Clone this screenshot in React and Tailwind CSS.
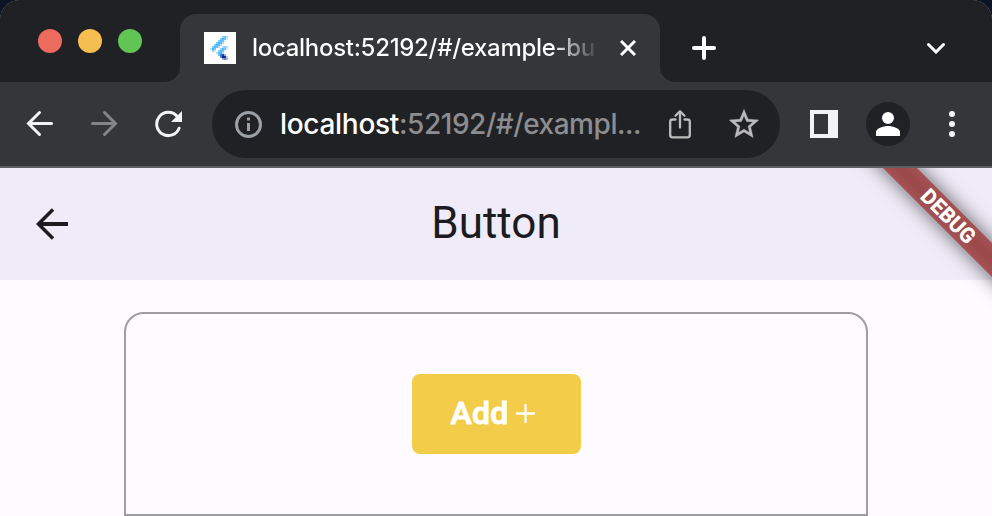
const FAVICON = [
  ["9,2", "#8fd0f8"], ["10,2", "#74c4f7"], ["11,2", "#b4defa"],
  ["8,3", "#7cc8f7"], ["9,3", "#55b9f5"], ["10,3", "#74c4f7"], ["11,3", "#d5edfc"],
  ["7,4", "#7cc8f7"], ["8,4", "#55b9f5"], ["9,4", "#74c4f7"], ["10,4", "#dff1fd"],
  ["6,5", "#7cc8f7"], ["7,5", "#55b9f5"], ["8,5", "#64bef6"], ["9,5", "#b4defa"],
  ["5,6", "#7cc8f7"], ["6,6", "#55b9f5"], ["7,6", "#64bef6"], ["8,6", "#b4defa"],
  ["4,7", "#7cc8f7"], ["5,7", "#55b9f5"], ["6,7", "#64bef6"], ["7,7", "#b4defa"], ["9,7", "#b4defa"], ["10,7", "#8fd0f8"], ["11,7", "#b4defa"],
  ["3,8", "#b4defa"], ["4,8", "#55b9f5"], ["5,8", "#74c4f7"], ["8,8", "#8fd0f8"], ["9,8", "#55b9f5"], ["10,8", "#74c4f7"], ["11,8", "#d5edfc"],
  ["4,9", "#8fd0f8"], ["5,9", "#d5edfc"], ["7,9", "#8fd0f8"], ["8,9", "#55b9f5"], ["9,9", "#74c4f7"], ["10,9", "#dff1fd"],
  ["6,10", "#b4defa"], ["7,10", "#55b9f5"], ["8,10", "#55b9f5"], ["9,10", "#b4defa"],
  ["7,11", "#74c4f7"], ["8,11", "#2f86cf"], ["9,11", "#1d4a9c"], ["10,11", "#9aa9cd"],
  ["8,12", "#5a7fc4"], ["9,12", "#02298a"], ["10,12", "#12388f"], ["11,12", "#c7cfe3"],
  ["9,13", "#93a3ca"], ["10,13", "#6f86ba"], ["11,13", "#a9b5d3"],
];

function Favicon() {
  return (
    <svg className="size-8 shrink-0 bg-white" viewBox="0 0 16 16" shapeRendering="crispEdges">
      {FAVICON.map(([pos, fill]) => {
        const [x, y] = pos.split(",");
        return <rect key={pos} x={x} y={y} width="1" height="1" fill={fill} />;
      })}
    </svg>
  );
}

function TabStrip() {
  return (
    <div className="flex h-[82px] bg-[#35363a]">
      <div className="flex w-[180px] shrink-0 gap-4 rounded-br-[15px] bg-[#202124] pl-[38px] pt-[29px]">
        <span className="size-6 rounded-full bg-[#ed6a5f]" />
        <span className="size-6 rounded-full bg-[#f6be50]" />
        <span className="size-6 rounded-full bg-[#61c555]" />
      </div>
      <div className="w-[480px] shrink-0 bg-[#202124] pt-[14px]">
        <div className="flex h-[68px] items-center rounded-t-[16px] bg-[#35363a] pl-6">
          <Favicon />
          <div className="ml-4 w-[344px] whitespace-nowrap bg-[linear-gradient(to_right,#fff_300px,#35363a_348px)] bg-clip-text text-[24px] font-medium leading-[36px] tracking-[-0.3px] text-transparent">
            localhost:52192/#/example-bu
          </div>
          <svg className="ml-6 size-4 shrink-0" viewBox="0 0 16 16" fill="none" stroke="#fff" strokeWidth="3">
            <path d="M1 1 15 15M15 1 1 15" />
          </svg>
        </div>
      </div>
      <div className="flex flex-1 items-center justify-between rounded-bl-[15px] bg-[#202124] pl-8 pr-[46px] pt-[14px]">
        <svg className="size-6" viewBox="0 0 24 24" stroke="#fff" strokeWidth="4" strokeLinecap="round">
          <path d="M12 2v20M2 12h20" />
        </svg>
        <svg className="h-3 w-5" viewBox="0 0 20 12" fill="none" stroke="#fff" strokeWidth="3" strokeLinecap="round">
          <path d="M2.5 2.500 10 10 17.5 2.500" />
        </svg>
      </div>
    </div>
  );
}

function Toolbar() {
  return (
    <div className="flex h-[86px] items-center border-b-2 border-[#5d5e62] bg-[#35363a]">
      <svg className="ml-[26px] size-7 shrink-0" viewBox="0 0 28 28" fill="none" stroke="#f1f3f4" strokeWidth="3" strokeLinecap="round">
        <path d="M25.5 13.5H3M13.5 2.5 2.5 13.5 13.5 24.5" />
      </svg>
      <svg className="ml-9 size-7 shrink-0" viewBox="0 0 28 28" fill="none" stroke="#848588" strokeWidth="3" strokeLinecap="round">
        <path d="M2.5 13.5H25M14.500 2.5 25.500 13.500 14.500 24.500" />
      </svg>
      <svg className="ml-9 size-7 shrink-0" viewBox="0 0 28 28" fill="none">
        <path d="M25.100 18.200A11.600 11.600 0 1 1 23 6.300" stroke="#f1f3f4" strokeWidth="3" strokeLinecap="round" />
        <path d="M28 1v11H17z" fill="#f1f3f4" />
      </svg>
      <div className="ml-[30px] flex h-[68px] w-[568px] shrink-0 items-center rounded-full bg-[#202124] pl-[23px]">
        <svg className="size-7 shrink-0" viewBox="0 0 28 28" fill="none" stroke="#9aa0a6" strokeWidth="3">
          <circle cx="13.5" cy="14.500" r="12" />
          <path d="M13.500 7.500v3M13.500 13v8" />
        </svg>
        <div className="ml-[17px] w-[362px] shrink-0 whitespace-nowrap text-[28px] font-medium leading-[40px] tracking-[-0.3px] text-white">
          localhost<span className="tracking-[-0.450px] text-[#8c8d90]">:52192/#/exampl...</span>
        </div>
        <svg className="ml-[26px] h-[30px] w-6 shrink-0" viewBox="0 0 24 30" fill="none" stroke="#bcbcbd" strokeWidth="2.300" strokeLinecap="round" strokeLinejoin="round">
          <path d="M7.500 10.500H4.500Q2.200 10.500 2.200 12.800V26Q2.200 28.300 4.500 28.300H19.500Q21.800 28.300 21.800 26V12.800Q21.800 10.500 19.500 10.500H16.500M12 18.500V2.500M7.500 6.800 12 2.300 16.500 6.800" />
        </svg>
        <svg className="ml-[37px] size-[30px] shrink-0" viewBox="1.800 1.700 20.400 20.400" fill="#bcbcbd" stroke="#bcbcbd" strokeWidth="0.3">
          <path d="m22 9.240-7.190-.620L12 2 9.190 8.630 2 9.240l5.460 4.730L5.820 21 12 17.270 18.180 21l-1.630-7.030L22 9.240zM12 15.400l-3.760 2.270 1-4.280-3.320-2.880 4.380-.380L12 6.100l1.710 4.040 4.380.380-3.320 2.880 1 4.280L12 15.400z" />
        </svg>
      </div>
      <div className="ml-[30px] flex size-7 shrink-0 bg-[#f1f3f4] p-1">
        <span className="h-5 w-[14px] bg-[#35363a]" />
      </div>
      <div className="ml-7 flex size-11 shrink-0 items-center justify-center rounded-full bg-[#202124]">
        <svg className="size-6" viewBox="0 0 24 24" fill="#fff">
          <circle cx="12" cy="6" r="6" />
          <path d="M0 24v-4c0-3.500 7-6 12-6s12 2.500 12 6v4z" />
        </svg>
      </div>
      <div className="ml-[39px] flex flex-col gap-1">
        <span className="size-1.5 rounded-full bg-[#f1f3f4]" />
        <span className="size-1.5 rounded-full bg-[#f1f3f4]" />
        <span className="size-1.5 rounded-full bg-[#f1f3f4]" />
      </div>
    </div>
  );
}

function AppBar() {
  return (
    <header className="flex h-28 items-center bg-[#efebf8] pl-9 pr-[68px]">
      <svg className="size-8 shrink-0" viewBox="0 0 32 32" fill="none" stroke="#1c1b1f" strokeWidth="4">
        <path d="M32 16H4" />
        <path d="M17 1.500 2.500 16 17 30.500" strokeWidth="3.500" />
      </svg>
      <h1 className="flex-1 pb-0.5 text-center font-['Roboto',sans-serif] text-[44px] leading-[56px] text-[#1c1b1f]">
        Button
      </h1>
    </header>
  );
}

function DebugBanner() {
  return (
    <div className="absolute right-0 top-0 size-[160px] overflow-hidden">
      <div className="absolute left-[-5px] top-[35px] flex h-6 w-[240px] rotate-45 items-center justify-center bg-[linear-gradient(to_bottom,#a55254,#9a484a_50%,#a55254)] pl-1 font-['Roboto',sans-serif] text-[20.400px] font-medium leading-6 tracking-[0.500px] text-white shadow-[0_0_20px_rgba(0,0,0,0.6)] [-webkit-text-stroke:0.8px_#fff]">
        DEBUG
      </div>
    </div>
  );
}

export default function App() {
  return (
    <div className="h-[516px] w-[992px] overflow-hidden bg-[#0b1526] font-['Inter',sans-serif]">
      <div className="h-full overflow-hidden rounded-t-[20px] bg-[#fdfbff]">
        <TabStrip />
        <Toolbar />
        <div className="relative">
          <AppBar />
          <main className="flex justify-center pt-8">
            <section className="flex h-[204px] w-[744px] justify-center rounded-t-[20px] border-2 border-[#9e9da0] pt-[60px]">
              <button className="flex h-20 w-[169px] items-center justify-center gap-[7px] rounded-lg bg-[#f3cc49] pb-0.5 pr-[7px] font-['Roboto',sans-serif] text-[32px] font-medium leading-10 text-white">
                <span className="tracking-[0.300px] [-webkit-text-stroke:1px_#fff]">Add</span>
                <svg className="mt-px size-[19px]" viewBox="0 0 19 19" stroke="#fff" strokeWidth="2.300">
                  <path d="M9.500 0v19M0 9.500h19" />
                </svg>
              </button>
            </section>
          </main>
          <DebugBanner />
        </div>
      </div>
    </div>
  );
}
